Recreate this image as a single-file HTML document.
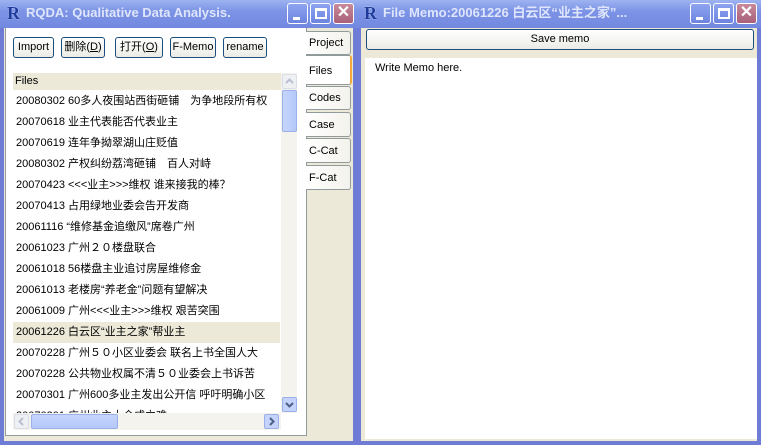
<!DOCTYPE html>
<html><head><meta charset="utf-8"><style>
*{margin:0;padding:0;box-sizing:border-box}
body{width:761px;height:445px;overflow:hidden;background:#ece9d8;position:relative;font-family:Tahoma,"Liberation Sans","Noto Sans CJK SC",sans-serif;font-size:11px;color:#000}
.win{position:absolute;top:0;height:445px;background:#ece9d8;border:4px solid #6f7cd6;border-top:none}
.tb{position:absolute;left:-4px;right:-4px;top:0;height:28px;background:linear-gradient(#9db3f0,#7c93e6 40%,#7289e0);color:#dfe6fb;font-weight:bold;font-size:13px;line-height:26px;padding-left:26px;white-space:nowrap;overflow:hidden}
.logo{position:absolute;left:7px;top:4px;font:bold 18px "Liberation Serif",serif;color:#1d3c9c;line-height:18px;text-shadow:0 0 1px #fff}
.tbtn{position:absolute;top:3px;width:21px;height:21px;border:1px solid #fff;border-radius:3px;background:linear-gradient(#8ea4f0,#6d84e0)}
.tbtn.x{background:linear-gradient(#c88a9a,#a8607a)}
.btn{position:absolute;height:21px;border:1px solid #1c4d7c;border-radius:3px;background:linear-gradient(#fff,#ecebe6);font-size:11px;line-height:19px;text-align:center}
.row{position:absolute;left:13px;width:267px;height:21px;line-height:21px;padding-left:3px;white-space:nowrap;overflow:hidden}
.tab{position:absolute;left:306px;width:45px;background:linear-gradient(90deg,#fff,#f3f2ec);border:1px solid #919b9c;border-left:none;border-radius:0 3px 3px 0;padding-left:3px;font-size:11px}
</style></head><body>
<div class="win" style="left:0;width:357px">
 <div class="tb"><span class="logo">R</span>RQDA: Qualitative Data Analysis.
  <div class="tbtn" style="left:287px"><div style="position:absolute;left:5px;top:13px;width:7px;height:3px;background:#fff"></div></div>
  <div class="tbtn" style="left:310px"><div style="position:absolute;left:4px;top:4px;width:12px;height:11px;border:2px solid #fff;border-top-width:3px"></div></div>
  <div class="tbtn x" style="left:333px;color:#fff;font-size:16px;line-height:18px;text-align:center">✕</div>
 </div>
</div>
<div style="position:absolute;left:5px;top:28px;width:302px;height:408px;background:#fff;border:1px solid #919b9c;border-top:none"></div>
<div class="btn" style="left:13px;top:37px;width:41px">Import</div>
<div class="btn" style="left:61px;top:37px;width:44px">删除(<u>D</u>)</div>
<div class="btn" style="left:115px;top:37px;width:48px">打开(<u>O</u>)</div>
<div class="btn" style="left:170px;top:37px;width:46px">F-Memo</div>
<div class="btn" style="left:223px;top:37px;width:44px">rename</div>
<div style="position:absolute;left:13px;top:73px;width:268px;height:17px;background:#ece9d8;line-height:17px;padding-left:2px">Files</div>
<div class="row" style="top:91px">20080302 60多人夜围站西街砸铺　为争地段所有权</div>
<div class="row" style="top:112px">20070618 业主代表能否代表业主</div>
<div class="row" style="top:133px">20070619 连年争拗翠湖山庄贬值</div>
<div class="row" style="top:154px">20080302 产权纠纷荔湾砸铺　百人对峙</div>
<div class="row" style="top:175px">20070423 &lt;&lt;&lt;业主&gt;&gt;&gt;维权 谁来接我的棒？</div>
<div class="row" style="top:196px">20070413 占用绿地业委会告开发商</div>
<div class="row" style="top:217px">20061116 “维修基金追缴风”席卷广州</div>
<div class="row" style="top:238px">20061023 广州２０楼盘联合</div>
<div class="row" style="top:259px">20061018 56楼盘主业追讨房屋维修金</div>
<div class="row" style="top:280px">20061013 老楼房“养老金”问题有望解决</div>
<div class="row" style="top:301px">20061009 广州&lt;&lt;&lt;业主&gt;&gt;&gt;维权 艰苦突围</div>
<div class="row" style="top:322px;background:#ece9d8">20061226 白云区“业主之家”帮业主</div>
<div class="row" style="top:343px">20070228 广州５０小区业委会 联名上书全国人大</div>
<div class="row" style="top:364px">20070228 公共物业权属不清５０业委会上书诉苦</div>
<div class="row" style="top:385px">20070301 广州600多业主发出公开信 呼吁明确小区</div>
<div class="row" style="top:406px;height:7px;line-height:21px">20070301 广州业主大会成立难</div>
<div style="position:absolute;left:281px;top:73px;width:16px;height:340px;background:#f4f3ee"></div>
<div style="position:absolute;left:282px;top:74px;width:15px;height:15px;border:1px solid #d8dde8;border-radius:2px;background:#eef0f4"><svg width="13" height="13"><path d="M3 8 L6.5 4.5 L10 8" stroke="#b8bfd0" stroke-width="2" fill="none"/></svg></div>
<div style="position:absolute;left:282px;top:90px;width:15px;height:42px;border:1px solid #9bb0e8;border-radius:2px;background:linear-gradient(90deg,#c6d5fc,#b4c8fa)"></div>
<div style="position:absolute;left:282px;top:397px;width:15px;height:15px;border:1px solid #9bb0e8;border-radius:2px;background:#c4d3fb"><svg width="13" height="13"><path d="M3 5 L6.5 8.5 L10 5" stroke="#4d6185" stroke-width="2" fill="none"/></svg></div>
<div style="position:absolute;left:13px;top:413px;width:268px;height:17px;background:#f4f3ee"></div>
<div style="position:absolute;left:14px;top:414px;width:15px;height:15px;border:1px solid #d8dde8;border-radius:2px;background:#eef0f4"><svg width="13" height="13"><path d="M8 3 L4.5 6.5 L8 10" stroke="#b8bfd0" stroke-width="2" fill="none"/></svg></div>
<div style="position:absolute;left:31px;top:414px;width:87px;height:15px;border:1px solid #9bb0e8;border-radius:2px;background:linear-gradient(#c6d5fc,#b4c8fa)"></div>
<div style="position:absolute;left:264px;top:414px;width:15px;height:15px;border:1px solid #9bb0e8;border-radius:2px;background:#c4d3fb"><svg width="13" height="13"><path d="M5 3 L8.5 6.5 L5 10" stroke="#4d6185" stroke-width="2" fill="none"/></svg></div>
<div class="tab" style="top:31px;height:24px;line-height:23px">Project</div>
<div class="tab" style="top:55px;height:30px;line-height:30px;background:#fff;border-right:2px solid #f3a83a;width:46px">Files</div>
<div class="tab" style="top:86px;height:24px;line-height:23px">Codes</div>
<div class="tab" style="top:112px;height:25px;line-height:24px">Case</div>
<div class="tab" style="top:138px;height:25px;line-height:24px">C-Cat</div>
<div class="tab" style="top:165px;height:25px;line-height:24px">F-Cat</div>

<div class="win" style="left:357px;width:404px">
 <div class="tb"><span class="logo">R</span>File Memo:20061226 白云区“业主之家”...
  <div class="tbtn" style="left:333px"><div style="position:absolute;left:5px;top:13px;width:7px;height:3px;background:#fff"></div></div>
  <div class="tbtn" style="left:356px"><div style="position:absolute;left:4px;top:4px;width:12px;height:11px;border:2px solid #fff;border-top-width:3px"></div></div>
  <div class="tbtn x" style="left:379px;color:#fff;font-size:16px;line-height:18px;text-align:center">✕</div>
 </div>
</div>
<div class="btn" style="left:366px;top:29px;width:388px">Save memo</div>
<div style="position:absolute;left:365px;top:58px;width:392px;height:381px;background:#fff;padding:4px 10px;font-size:11px">Write Memo here.</div>
</body></html>
